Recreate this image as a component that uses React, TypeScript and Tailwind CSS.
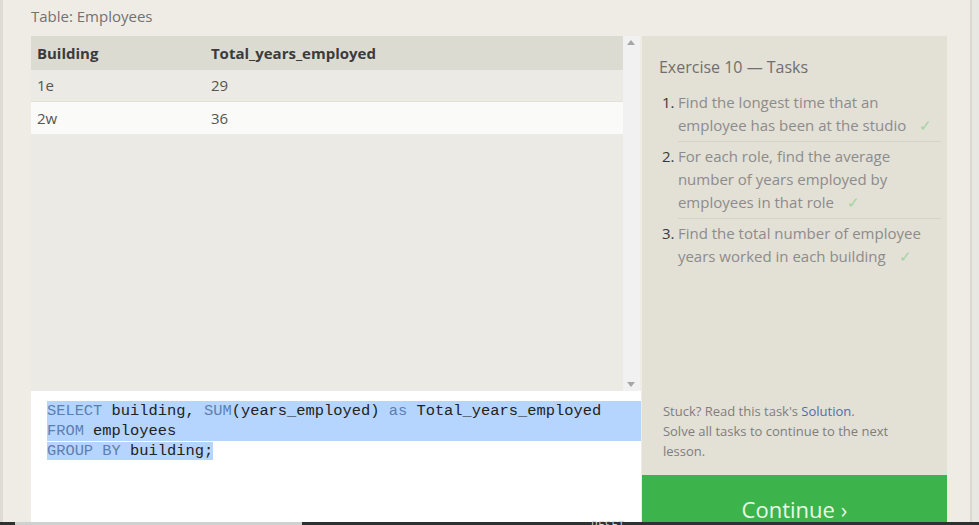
import React from "react";

const Check = () => <span className="ml-[13px] text-[#9fd49f]">✓</span>;

export default function App() {
  const sans = { fontFamily: '"Open Sans", "Noto Sans", sans-serif' };
  const mono = { fontFamily: '"Liberation Mono", "DejaVu Sans Mono", monospace' };
  return (
    <div className="w-[979px] h-[525px] overflow-hidden flex flex-col bg-[#efece6]" style={sans}>
      <div className="flex flex-1 min-h-0">
        <div className="w-[3px] bg-[#dedbd4]" />
        <div className="flex-1 flex flex-col pl-[28px]">
          <div className="h-[36px] pt-[5px] pl-[-1px] text-[15px] text-[#727272]">Table: Employees</div>
          <div className="flex flex-1 min-h-0">
            {/* left column */}
            <div className="w-[610px] flex flex-col">
              <div className="h-[355px] flex">
                <div className="w-[592px] bg-[#ebeae4] flex flex-col">
                  <div className="h-[34px] bg-[#dcdbd2] flex items-center text-[15px] font-bold text-[#3b3b3b]">
                    <div className="w-[180px] pl-[6px]">Building</div>
                    <div>Total_years_employed</div>
                  </div>
                  <div className="h-[32px] bg-[#ebeae4] flex items-center text-[15px] text-[#555] border-b border-[#e2e1da]">
                    <div className="w-[180px] pl-[6px]">1e</div>
                    <div>29</div>
                  </div>
                  <div className="h-[32px] bg-[#fafaf9] flex items-center text-[15px] text-[#555]">
                    <div className="w-[180px] pl-[6px]">2w</div>
                    <div>36</div>
                  </div>
                </div>
                <div className="w-[17px] bg-[#f1f1f1] flex flex-col items-center justify-between py-[4px]">
                  <svg width="8" height="5" viewBox="0 0 8 5"><path d="M0 5 L4 0 L8 5Z" fill="#a6a6a6" /></svg>
                  <svg width="8" height="5" viewBox="0 0 8 5"><path d="M0 0 L4 5 L8 0Z" fill="#a6a6a6" /></svg>
                </div>
              </div>
              <div className="flex-1 bg-white relative pt-[10px] text-[15.4px] leading-[20px] text-[#222]" style={mono}>
                <div className="ml-[16px] bg-[#b5d5ff] whitespace-pre">
                  <span className="text-[#5c7fb2]">SELECT</span> building, <span className="text-[#5c7fb2]">SUM</span>(years_employed) <span className="text-[#5c7fb2]">as</span> Total_years_employed
                </div>
                <div className="ml-[16px] bg-[#b5d5ff] whitespace-pre">
                  <span className="text-[#5c7fb2]">FROM</span> employees
                </div>
                <div className="ml-[16px] whitespace-pre">
                  <span className="bg-[#b5d5ff]"><span className="text-[#5c7fb2]">GROUP BY</span> building;</span>
                </div>
                <div className="absolute left-[560px] top-[124px] text-[11px] text-[#d6d6d6] tracking-wider" style={sans}>RESET</div>
              </div>
            </div>
            {/* right panel */}
            <div className="w-[305px] ml-[1px] flex flex-col">
              <div className="flex-1 bg-[#e3e0d6] pl-[17px] pr-[6px] pt-[21px] flex flex-col">
                <div className="text-[16px] text-[#6f6f6f] leading-[20px]">Exercise 10 — Tasks</div>
                <ol className="mt-[14px] text-[15px] leading-[23px] text-[#8c8c8c]">
                  <li className="flex">
                    <span className="w-[19px] pl-[3px] text-[#3a3a3a]">1.</span>
                    <span className="w-[263px] pb-[4px] border-b border-[#d6d3c9]">Find the longest time that an employee has been at the studio<Check /></span>
                  </li>
                  <li className="flex">
                    <span className="w-[19px] pl-[3px] pt-[3px] text-[#3a3a3a]">2.</span>
                    <span className="w-[263px] pt-[3px] pb-[4px] border-b border-[#d6d3c9]"><span className="inline-block w-[225px]">For each role, find the average number of years employed by employees in that role<Check /></span></span>
                  </li>
                  <li className="flex">
                    <span className="w-[19px] pl-[3px] pt-[3px] text-[#3a3a3a]">3.</span>
                    <span className="w-[263px] pt-[3px]">Find the total number of employee years worked in each building<Check /></span>
                  </li>
                </ol>
                <div className="mt-auto pb-[14px] pl-[4px] text-[13px] leading-[20px] text-[#7e7e7e]">
                  <div>Stuck? Read this task's <span className="text-[#4a6fb0]">Solution</span>.</div>
                  <div>Solve all tasks to continue to the next</div>
                  <div>lesson.</div>
                </div>
              </div>
              <div className="h-[47px] bg-[#3cb44b] flex items-end justify-center text-[22px] leading-[26px] text-[#eaf8e6]">
                Continue ›
              </div>
            </div>
          </div>
        </div>
        <div className="w-[24px]" />
        <div className="w-[2px] bg-[#dcd9d3]" />
        <div className="w-[7px] bg-[#e9e7e2]" />
      </div>
      <div className="h-[3px] bg-[#2c3131] flex">
        <div className="w-[15px]" />
        <div className="w-[287px] bg-[#cfd0d0]" />
      </div>
    </div>
  );
}
